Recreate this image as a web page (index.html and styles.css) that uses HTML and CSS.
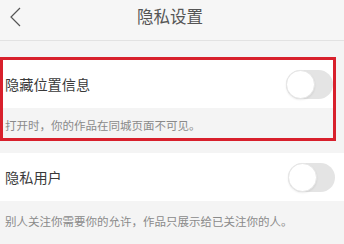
FILE: index.html
```html
<!DOCTYPE html>
<html lang="zh">
<head>
<meta charset="utf-8">
<link rel="stylesheet" href="styles.css">
</head>
<body>
<div class="page">
  <header class="bar">
    <svg class="back" width="12" height="20" viewBox="0 0 12 20"><path d="M11 1 L2 10 L11 19" fill="none" stroke="#555" stroke-width="1.2"/></svg>
    <div class="title">隐私设置</div>
  </header>
  <div class="gap1"></div>
  <section class="group marked">
    <div class="row">
      <span class="label">隐藏位置信息</span>
      <span class="toggle"><span class="knob"></span></span>
    </div>
    <div class="desc short">打开时，你的作品在同城页面不可见。</div>
  </section>
  <div class="gap2"></div>
  <section class="group">
    <div class="row">
      <span class="label">隐私用户</span>
      <span class="toggle"><span class="knob"></span></span>
    </div>
    <div class="desc">别人关注你需要你的允许，作品只展示给已关注你的人。</div>
  </section>
</div>
</body>
</html>
```
FILE: styles.css
```css
* { box-sizing: border-box; }
html, body { margin: 0; padding: 0; }
body {
  background: #f4f4f4;
  font-family: "Noto Sans CJK SC", "Noto Sans", sans-serif;
  width: 344px;
  height: 244px;
  overflow: hidden;
}
.bar {
  height: 41px;
  background: #f6f6f6;
  border-bottom: 1px solid #e2e2e2;
  display: flex;
  align-items: center;
  justify-content: center;
  position: relative;
}
.back { position: absolute; left: 9px; top: 7px; }
.title {
  font-size: 16.5px;
  color: #555;
  margin-left: -4px;
  margin-top: -8px;
}
.gap1 { height: 16px; }
.gap2 { height: 12px; }
.group { width: 344px; }
.group.marked {
  width: 336px;
  border: 3px solid #d8202c;
}
.row {
  height: 48px;
  background: #fff;
  display: flex;
  align-items: center;
  justify-content: space-between;
  padding: 0 9px 0 5px;
}
.marked .row { padding: 0 0 0 2px; }
.label {
  font-size: 14.2px;
  color: #3a3a3a;
}
.toggle {
  width: 47px;
  height: 29px;
  border-radius: 15px;
  background: #e4e4e4;
  display: flex;
  align-items: center;
}
.knob {
  width: 29px;
  height: 29px;
  border-radius: 50%;
  background: #fff;
  border: 1px solid #e6e6e6;
  box-shadow: 0 1px 2px rgba(0,0,0,0.08);
}
.desc {
  height: 43px;
  padding: 12px 5px 0;
  font-size: 11.5px;
  color: #8a8a8a;
  background: #f4f4f4;
}
.desc.short { height: 30px; padding: 9px 2px 0; }
```
